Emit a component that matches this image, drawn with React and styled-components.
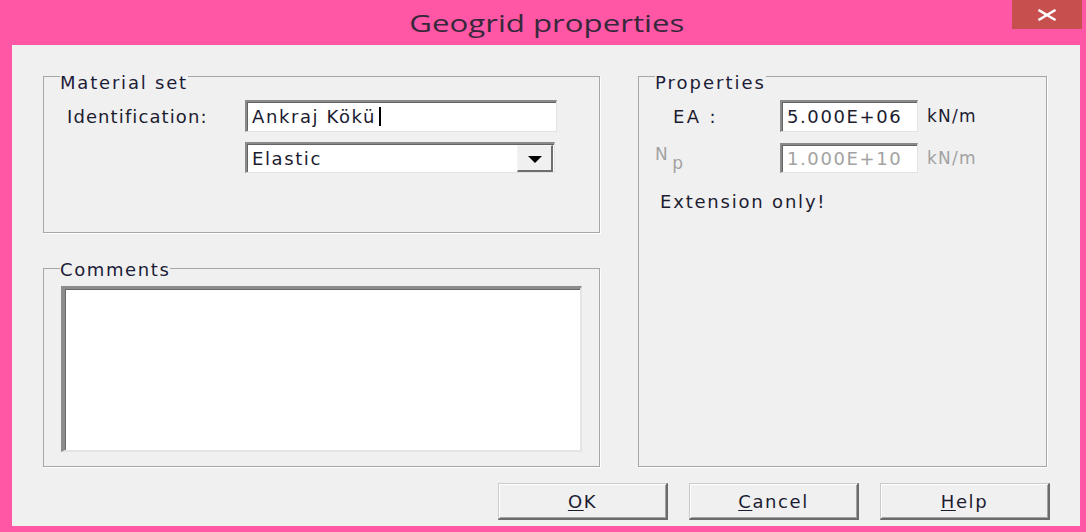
import React from "react";
import styled, { createGlobalStyle } from "styled-components";

const GlobalStyle = createGlobalStyle`
  html, body {
    margin: 0;
    padding: 0;
    background: #ffffff;
  }
  body {
    font-family: "DejaVu Sans", Verdana, sans-serif;
    color: #1c1c30;
  }
`;

function CloseIcon() {
  return (
    <svg width="20" height="12" viewBox="0 0 20 12">
      <path d="M2.5 1.5 L17.5 10.5 M17.5 1.5 L2.5 10.5" stroke="#fff" strokeWidth="2.4" strokeLinecap="square" />
    </svg>
  );
}

function GeogridDialog() {
  return (
    <S.Window>
      <S.TitleBar>
        <S.Title>
          <span>Geogrid properties</span>
        </S.Title>
        <S.Close>
          <CloseIcon />
        </S.Close>
      </S.TitleBar>

      <S.Client>
        <S.Main>
          <S.LeftCol>
            <S.Group $height={174}>
              <S.Legend $drop={13} $ls={1.8}>Material set</S.Legend>
              <S.MaterialBody>
                <S.Label $ls={1.1}>Identification:</S.Label>
                <S.TextBox>
                  Ankraj Kökü
                  <S.Caret />
                </S.TextBox>
                <span />
                <S.Select>
                  <span>Elastic</span>
                  <S.ArrowButton>
                    <S.Triangle />
                  </S.ArrowButton>
                </S.Select>
              </S.MaterialBody>
            </S.Group>

            <S.Group $grow>
              <S.Legend $drop={3} $ls={1.6}>Comments</S.Legend>
              <S.CommentsBody>
                <S.TextArea />
              </S.CommentsBody>
            </S.Group>
          </S.LeftCol>

          <S.Group>
            <S.Legend $drop={13} $ls={2}>Properties</S.Legend>
            <S.PropsBody>
              <S.FieldRow>
                <S.Label $indent={34} $ls={2.4}>EA :</S.Label>
                <S.TextBox>5.000E+06</S.TextBox>
                <S.Unit>kN/m</S.Unit>
              </S.FieldRow>
              <S.FieldRow $gap={11} $dim>
                <S.Label $indent={16} $small>
                  N<S.Sub>p</S.Sub>
                </S.Label>
                <S.TextBox $dim $h={30}>1.000E+10</S.TextBox>
                <S.Unit>kN/m</S.Unit>
              </S.FieldRow>
              <S.Note>Extension only!</S.Note>
            </S.PropsBody>
          </S.Group>
        </S.Main>

        <S.Buttons>
          <S.Button>
            <u>O</u>K
          </S.Button>
          <S.Button>
            <u>C</u>ancel
          </S.Button>
          <S.Button>
            <u>H</u>elp
          </S.Button>
        </S.Buttons>
      </S.Client>
    </S.Window>
  );
}

const S = {
  Window: styled.div`
    width: 1086px;
    height: 532px;
    background: #ff57a6;
    display: flex;
    flex-direction: column;
    overflow: hidden;
  `,
  TitleBar: styled.div`
    height: 45px;
    flex: none;
    display: grid;
    grid-template-columns: 74px 1fr 74px;
  `,
  Title: styled.div`
    grid-column: 2;
    justify-self: center;
    align-self: center;
    padding-left: 8px;
    font-family: "Open Sans", "Noto Sans", sans-serif;
    font-size: 24px;
    color: #36283a;

    & span {
      display: inline-block;
      transform: scaleX(1.3);
    }
  `,
  Close: styled.div`
    grid-column: 3;
    justify-self: start;
    width: 70px;
    height: 29px;
    background: #c7504f;
    display: flex;
    align-items: center;
    justify-content: center;
  `,
  Client: styled.div`
    flex: 1;
    margin: 0 6px 6px 12px;
    background: #f0f0f0;
    padding: 14px 33px 6px 31px;
    display: flex;
    flex-direction: column;
  `,
  Main: styled.div`
    display: grid;
    grid-template-columns: 557px 409px;
    column-gap: 38px;
    height: 408px;
  `,
  LeftCol: styled.div`
    display: flex;
    flex-direction: column;
    gap: 23px;
  `,
  Group: styled.fieldset`
    margin: 0;
    padding: 0;
    min-width: 0;
    box-sizing: border-box;
    border: 1px solid #a7a7a7;
    box-shadow: 1px 1px 0 #ffffff;
    ${({ $height }) => ($height ? `height: ${$height}px; flex: none;` : "")}
    ${({ $grow }) => ($grow ? "flex: 1;" : "")}
  `,
  Legend: styled.legend`
    margin-left: 16px;
    padding: ${({ $drop }) => $drop}px 0 0;
    font-size: 18px;
    line-height: 21px;
    letter-spacing: ${({ $ls }) => $ls}px;
    color: #1c1c38;
  `,
  MaterialBody: styled.div`
    padding: 7px 0 0 23px;
    display: grid;
    grid-template-columns: 178px 312px;
    row-gap: 10px;
    align-items: center;
  `,
  Label: styled.div`
    font-size: ${({ $small }) => ($small ? 17 : 18)}px;
    letter-spacing: ${({ $ls }) => $ls ?? 1.6}px;
    padding-left: ${({ $indent }) => $indent ?? 0}px;
    white-space: nowrap;
  `,
  TextBox: styled.div`
    height: ${({ $h }) => $h ?? 32}px;
    box-sizing: border-box;
    background: #ffffff;
    border-style: solid;
    border-width: 2px 1px 1px 2px;
    border-color: #8a8a8a #e2e2e2 #e2e2e2 #8a8a8a;
    box-shadow: inset 1px 1px 0 #646464;
    padding: 0 5px;
    display: flex;
    align-items: center;
    font-size: 18px;
    letter-spacing: 1.6px;
    white-space: nowrap;
    color: ${({ $dim }) => ($dim ? "#a2a2a2" : "#1c1c30")};
  `,
  Caret: styled.span`
    display: inline-block;
    width: 2px;
    height: 19px;
    margin-left: 3px;
    background: #000000;
  `,
  Select: styled.div`
    width: 310px;
    height: 31px;
    box-sizing: border-box;
    background: #ffffff;
    border-style: solid;
    border-width: 2px 1px 1px 2px;
    border-color: #8a8a8a #e2e2e2 #e2e2e2 #8a8a8a;
    box-shadow: inset 1px 1px 0 #646464;
    padding: 1px 1px 0 5px;
    display: flex;
    align-items: stretch;
    justify-content: space-between;
    font-size: 18px;
    letter-spacing: 1.6px;

    & > span {
      align-self: center;
    }
  `,
  ArrowButton: styled.div`
    width: 36px;
    box-sizing: border-box;
    background: #f0f0f0;
    border-style: solid;
    border-width: 1px 2px 2px 1px;
    border-color: #f4f4f4 #6e6e6e #6e6e6e #f4f4f4;
    display: flex;
    align-items: center;
    justify-content: center;
  `,
  Triangle: styled.span`
    width: 0;
    height: 0;
    border-left: 7px solid transparent;
    border-right: 7px solid transparent;
    border-top: 7px solid #000000;
    margin-top: 2px;
  `,
  CommentsBody: styled.div`
    padding: 6px 17px 0 17px;
  `,
  TextArea: styled.div`
    height: 166px;
    box-sizing: border-box;
    background: #ffffff;
    border-style: solid;
    border-width: 3px 2px 2px 4px;
    border-color: #8c8c8c #e4e4e4 #e4e4e4 #8c8c8c;
    box-shadow: inset 1px 1px 0 #6a6a6a;
  `,
  PropsBody: styled.div`
    padding-top: 7px;
    display: flex;
    flex-direction: column;
  `,
  FieldRow: styled.div`
    display: grid;
    grid-template-columns: 132px 138px auto;
    column-gap: 9px;
    align-items: center;
    margin-top: ${({ $gap }) => $gap ?? 0}px;
    color: ${({ $dim }) => ($dim ? "#a2a2a2" : "#1c1c30")};
  `,
  Sub: styled.span`
    display: inline-block;
    vertical-align: -9px;
    margin-left: 3px;
  `,
  Unit: styled.span`
    font-size: 17px;
    letter-spacing: 1.2px;
  `,
  Note: styled.div`
    margin-top: 18px;
    padding-left: 21px;
    font-size: 18px;
    line-height: 21px;
    letter-spacing: 1.8px;
  `,
  Buttons: styled.div`
    display: flex;
    justify-content: flex-end;
    gap: 21px;
    margin: 16px -3px 0 0;
  `,
  Button: styled.div`
    width: 170px;
    height: 37px;
    box-sizing: border-box;
    background: #f0f0f0;
    border-style: solid;
    border-width: 1px 2px 2px 1px;
    border-color: #cacaca #6b6b6b #6b6b6b #cacaca;
    box-shadow: inset 1px 1px 0 #ffffff, inset -1px -1px 0 #a3a3a3;
    display: flex;
    align-items: center;
    justify-content: center;
    font-size: 18px;
    letter-spacing: 1.6px;
    color: #1c1c30;

    & u {
      text-underline-offset: 2px;
    }
  `,
};

export default function App() {
  return (
    <>
      <GlobalStyle />
      <GeogridDialog />
    </>
  );
}
